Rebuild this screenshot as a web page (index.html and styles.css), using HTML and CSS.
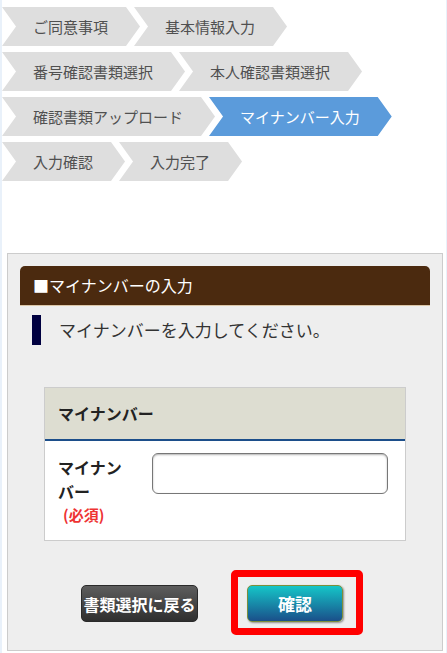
FILE: index.html
```html
<!DOCTYPE html>
<html lang="ja">
<head>
  <meta charset="UTF-8" />
  <meta name="viewport" content="width=device-width, initial-scale=1.0" />
  <title>マイナンバー入力</title>
  <link rel="stylesheet" href="styles.css">
</head>
<body>
  <div class="page">
    <div class="steps">
      <div class="step-row">
        <span class="step">ご同意事項</span>
        <span class="step">基本情報入力</span>
      </div>
      <div class="step-row">
        <span class="step">番号確認書類選択</span>
        <span class="step">本人確認書類選択</span>
      </div>
      <div class="step-row">
        <span class="step">確認書類アップロード</span>
        <span class="step current">マイナンバー入力</span>
      </div>
      <div class="step-row">
        <span class="step">入力確認</span>
        <span class="step">入力完了</span>
      </div>
    </div>

    <div class="panel">
      <h2 class="panel-title">■マイナンバーの入力</h2>
      <p class="lead">マイナンバーを入力してください。</p>

      <div class="form-box">
        <div class="form-head">マイナンバー</div>
        <div class="form-body">
          <label class="form-label" for="myNumber">マイナンバー<span class="req">(必須)</span></label>
          <input class="form-input" type="text" id="myNumber">
        </div>
      </div>

      <div class="actions">
        <button class="btn btn-back">書類選択に戻る</button>
        <span class="btn-wrap">
          <button class="btn btn-ok">確認</button>
          <span class="highlight"></span>
        </span>
      </div>
    </div>
  </div>
</body>
</html>
```

FILE: styles.css
```css
* { box-sizing: border-box; }
body {
  margin: 0;
  background: #e9f1fa;
  font-family: "Noto Sans CJK JP", "Noto Sans", sans-serif;
  color: #333;
}
.page {
  margin: 0 1px 0 2px;
  background: #fff;
  min-height: 653px;
  padding-top: 7px;
  overflow: hidden;
}

/* steps */
.step-row {
  display: flex;
  margin-bottom: 6px;
}
.step {
  display: block;
  height: 39px;
  line-height: 39px;
  font-size: 15px;
  color: #505050;
  background: #dedede;
  padding: 0 32px 0 31px;
  margin-right: -6px;
  white-space: nowrap;
  clip-path: polygon(0 0, calc(100% - 14px) 0, 100% 50%, calc(100% - 14px) 100%, 0 100%, 14px 50%);
}
.step.current {
  background: #5b9bdb;
  color: #fff;
}

/* panel */
.panel {
  margin: 72px 3px 0 5px;
  background: #eee;
  border: 1px solid #ccc;
  padding: 12px 12px 28px;
}
.panel-title {
  margin: 0;
  height: 40px;
  line-height: 39px;
  padding-left: 13px;
  font-size: 16px;
  font-weight: normal;
  color: #fff;
  background: #4b2a0f;
  border-radius: 5px 5px 0 0;
  border-bottom: 1px solid #dcc7a8;
}
.lead {
  margin: 9px 0 0 12px;
  height: 30px;
  line-height: 30px;
  border-left: 9px solid #000040;
  padding-left: 18px;
  font-size: 17px;
  color: #333;
}

/* form */
.form-box {
  margin: 42px 24px 0;
  border: 1px solid #ccc;
  background: #fff;
}
.form-head {
  height: 53px;
  line-height: 50px;
  padding-left: 13px;
  background: #ddddd1;
  border-bottom: 2px solid #1c4e8a;
  font-size: 16px;
  font-weight: bold;
  color: #222;
}
.form-body {
  display: flex;
  align-items: flex-start;
  padding: 14px 15px 13px 13px;
}
.form-label {
  width: 72px;
  font-size: 16px;
  line-height: 24px;
  font-weight: bold;
  color: #222;
}
.req {
  display: block;
  padding-left: 5px;
  font-size: 15px;
  color: #ee3333;
}
.form-input {
  margin: -2px 0 0 22px;
  width: 236px;
  height: 41px;
  border: 1px solid #777;
  border-radius: 6px;
  box-shadow: inset 0 1px 2px rgba(0,0,0,0.3);
  background: #fff;
}

/* buttons */
.actions {
  display: flex;
  align-items: center;
  gap: 49px;
  margin-top: 44px;
  padding-left: 61px;
}
.btn {
  height: 37px;
  border-radius: 5px;
  color: #fff;
  font-family: inherit;
  font-size: 16px;
  font-weight: bold;
  padding: 0;
  cursor: pointer;
}
.btn-back {
  width: 117px;
  background: linear-gradient(to bottom, #5d5d5d, #2f2f2f);
  border: 1px solid #2a2a2a;
}
.btn-wrap {
  position: relative;
  display: block;
}
.btn-ok {
  display: block;
  width: 96px;
  font-size: 17px;
  background: linear-gradient(to bottom, #15c6c8, #1a4f8a);
  border: 1px solid #7b8f3c;
  box-shadow: 1px 1px 2px rgba(0,0,0,0.4);
}
.highlight {
  position: absolute;
  left: -16px;
  top: -15px;
  width: 132px;
  height: 65px;
  border: 7px solid #f00;
  border-radius: 5px;
}
```
